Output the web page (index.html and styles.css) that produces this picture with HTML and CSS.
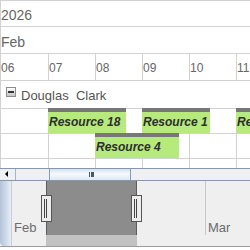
FILE: index.html
```html
<!DOCTYPE html>
<html lang="en">
<head>
  <meta charset="UTF-8">
  <title>Schedule</title>
  <link rel="stylesheet" href="styles.css">
</head>
<body>
  <div class="chart">
    <div class="hdr year">2026</div>
    <div class="hdr month">Feb</div>
    <div class="hdr days">
      <div class="day">06</div>
      <div class="day">07</div>
      <div class="day">08</div>
      <div class="day">09</div>
      <div class="day">10</div>
      <div class="day">11</div>
    </div>
    <!-- resource group -->
    <div class="group"><span class="toggle"></span><span class="group-name">Douglas  Clark</span></div>
    <div class="lane">
      <div class="bar" style="left: 47px; width: 78px;">Resource 18</div>
      <div class="bar" style="left: 141px; width: 68px;">Resource 1</div>
      <div class="bar" style="left: 235px; width: 80px;">Resource 7</div>
    </div>
    <div class="lane">
      <div class="bar" style="left: 94px; width: 84px;">Resource 4</div>
    </div>
    <div class="lane last"></div>
  </div>

  <div class="hscroll">
    <div class="arrow"></div>
    <div class="thumb"><span class="grip"></span></div>
  </div>

  <!-- overview -->
  <div class="overview">
    <div class="ov-edge"></div>
    <div class="ov-track">
      <div class="ov-label" style="left: 2px;">Feb</div>
      <div class="ov-tick" style="left: 193px;"></div>
      <div class="ov-label" style="left: 196px;">Mar</div>
      <div class="window"></div>
      <div class="handle" style="left: 29px;"></div>
      <div class="handle" style="left: 119px;"></div>
    </div>
  </div>
</body>
</html>
```

FILE: styles.css
```css
body {
  margin: 0;
  width: 250px;
  height: 250px;
  overflow: hidden;
  background-color: #ffffff;
  font-family: "Liberation Sans", Arial, sans-serif;
}
.chart {
  height: 168px;
  border-left: 1px solid #d2d2d2;
  overflow: hidden;
}
.hdr {
  border-bottom: 1px solid #d2d2d2;
  color: #666666;
}
.year {
  border-top: 1px solid #d2d2d2;
  height: 19px;
  padding-top: 6px;
  font-size: 14px;
  line-height: 16px;
}
.month {
  height: 19px;
  padding-top: 7px;
  font-size: 14px;
  line-height: 16px;
}
.days {
  display: flex;
  height: 26px;
}
.day {
  box-sizing: border-box;
  flex: none;
  width: 47px;
  padding-top: 7px;
  border-right: 1px solid #d2d2d2;
  font-size: 12px;
  line-height: 14px;
}
.day:first-child {
  width: 48px;
}
.group {
  display: flex;
  align-items: flex-start;
  height: 21px;
  padding: 6px 0 0 5px;
  border-bottom: 1px solid #d2d2d2;
}
.toggle {
  position: relative;
  width: 8px;
  height: 8px;
  margin-right: 5px;
  border: 1px solid #8c8c8c;
  background: linear-gradient(#ffffff, #c4c4c4);
}
.toggle::after {
  content: "";
  position: absolute;
  left: 1px;
  right: 1px;
  top: 3px;
  height: 2px;
  background-color: #333333;
}
.group-name {
  margin-top: 1px;
  color: #555555;
  font-size: 13px;
  line-height: 15px;
  white-space: pre;
}
.lane {
  position: relative;
  height: 24px;
  padding-left: 47px;
  border-bottom: 1px solid #d2d2d2;
  background: linear-gradient(to right, #d2d2d2 1px, transparent 1px) 0 0 / 47px 100% repeat-x content-box;
}
.lane.last {
  height: 9px;
  border-bottom: none;
}
.bar {
  position: absolute;
  top: -1px;
  box-sizing: border-box;
  height: 25px;
  padding-left: 1px;
  border-top: 4px solid #777777;
  background-color: #b6ea7c;
  color: #2e2e2e;
  font-size: 12px;
  font-weight: bold;
  font-style: italic;
  line-height: 21px;
  white-space: nowrap;
  overflow: hidden;
}
.hscroll {
  display: flex;
  height: 11px;
  border-top: 1px solid #8896aa;
  border-bottom: 1px solid #8896aa;
  background-color: #eef0f3;
}
.arrow {
  position: relative;
  width: 15px;
  border-right: 1px solid #a9b5c5;
}
.arrow::after {
  content: "";
  position: absolute;
  left: 5px;
  top: 2px;
  border-right: 3px solid #000000;
  border-top: 3px solid transparent;
  border-bottom: 3px solid transparent;
}
.thumb {
  display: flex;
  align-items: center;
  justify-content: center;
  width: 80px;
  margin-left: 33px;
  border: 1px solid #7f9dbd;
  border-top: none;
  border-bottom: none;
  background: linear-gradient(#d3e2f3, #f6f9fc 45%, #dde8f5);
}
.grip {
  width: 1px;
  height: 5px;
  border-left: 1px solid #4a5668;
  border-right: 1px solid #4a5668;
  box-shadow: 2px 0 0 #4a5668;
}
.overview {
  display: flex;
  height: 65px;
  border-bottom: 1px solid #9c9c9c;
}
.ov-edge {
  width: 11px;
  border-right: 1px solid #c6cfda;
  border-bottom-left-radius: 4px;
  background: linear-gradient(to right, #b2c3d8, #e6edf5);
}
.ov-track {
  position: relative;
  flex: 1;
  background-color: #efefef;
}
.ov-label {
  position: absolute;
  top: 39px;
  color: #6c6c6c;
  font-size: 13px;
  line-height: 15px;
}
.ov-tick {
  position: absolute;
  top: 0;
  width: 1px;
  height: 54px;
  background-color: #c8c8c8;
}
.window {
  position: absolute;
  left: 34px;
  top: 0;
  width: 89px;
  height: 54px;
  border-left: 1px solid #5c5c5c;
  border-right: 1px solid #5c5c5c;
  background-color: #8c8c8c;
}
.window::after {
  content: "";
  position: absolute;
  left: -1px;
  right: -1px;
  top: 54px;
  height: 11px;
  background-color: #c2c2c2;
}
.handle {
  position: absolute;
  top: 14px;
  width: 9px;
  height: 25px;
  border: 1px solid #555555;
  background-color: #ededed;
}
.handle::after {
  content: "";
  position: absolute;
  left: 2px;
  top: 3px;
  bottom: 3px;
  width: 1px;
  border-left: 1px solid #444444;
  border-right: 1px solid #444444;
}
```
